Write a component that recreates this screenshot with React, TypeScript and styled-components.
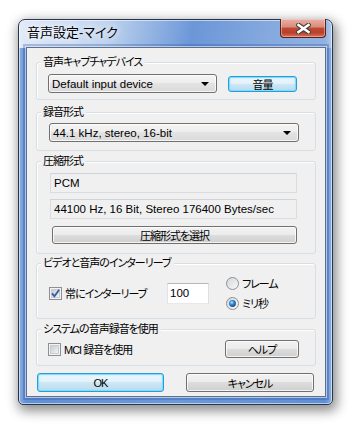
import React from 'react';
import styled, { createGlobalStyle, css } from 'styled-components';

const GlobalStyle = createGlobalStyle`
  html, body {
    margin: 0;
    padding: 0;
    background: #fff;
  }
  body {
    font-family: "Liberation Sans", "Noto Sans CJK JP", sans-serif;
    font-size: 11.5px;
    font-feature-settings: "palt";
    color: #000;
  }
  * {
    box-sizing: border-box;
  }
`;

// MS UI Gothic style: narrow kana
const jpText = css`
  font-size: 11px;
  letter-spacing: -1px;
`;

const Page = styled.div`
  width: 354px;
  height: 428px;
  padding: 19px 0 0 18px;
  overflow: hidden;
`;

const Window = styled.div`
  width: 315px;
  height: 386px;
  display: flex;
  flex-direction: column;
  border: 1px solid #27364d;
  border-radius: 7px 7px 5px 5px;
  background:
    linear-gradient(100deg, rgba(238, 244, 252, 0.9) 0%, rgba(222, 233, 247, 0.75) 28%, rgba(255, 255, 255, 0) 55%, rgba(255, 255, 255, 0.22) 80%, rgba(255, 255, 255, 0.32) 100%) top / 100% 28px no-repeat,
    linear-gradient(90deg, #8fb0e0 0px, #5f8fd4 7px, #6d98d8 50%, #5f8fd4 calc(100% - 7px), #8fb0e0 100%);
  box-shadow:
    inset 0 0 0 1px rgba(255, 255, 255, 0.55),
    2px 4px 12px 2px rgba(0, 0, 0, 0.45);
`;

const TitleBar = styled.div`
  height: 27px;
  display: flex;
  align-items: flex-start;
  padding-left: 8px;
`;

const Title = styled.span`
  font-size: 13px;
  line-height: 26px;
  text-shadow: 0 0 6px rgba(255, 255, 255, 0.95), 0 0 10px rgba(255, 255, 255, 0.8);
`;

const CloseButton = styled.div`
  width: 46px;
  height: 19px;
  margin: -1px 6px 0 auto;
  display: flex;
  align-items: center;
  justify-content: center;
  border: 1px solid #5a2118;
  border-top: none;
  border-radius: 0 0 4px 4px;
  background: linear-gradient(180deg, #e8b1a5 0%, #d98b79 45%, #c04a34 50%, #b9402b 75%, #d27157 100%);
  box-shadow: inset 0 0 0 1px rgba(255, 220, 210, 0.45);
`;

const Client = styled.div`
  flex: 1;
  margin: 0 6px 7px 7px;
  padding: 0 9px;
  display: flex;
  flex-direction: column;
  border: 1px solid #5d7090;
  background: #f0f0f0;
  box-shadow: 0 0 0 1px rgba(255, 255, 255, 0.55), 0 0 0 3px rgba(40, 80, 160, 0.3);
`;

const GroupBox = styled.div<{ $top: number }>`
  margin-top: ${(p) => p.$top}px;
  border: 1px solid #d5dfe5;
  border-radius: 3px;
  box-shadow: inset 1px 1px 0 #fff;
`;

const Legend = styled.div`
  ${jpText};
  width: fit-content;
  margin: -8px 0 0 4px;
  padding: 0 3px 0 2px;
  line-height: 14px;
  background: #f0f0f0;
`;

const buttonBase = css`
  font: inherit;
  color: #000;
  padding: 0;
  display: flex;
  align-items: center;
  justify-content: center;
  border: 1px solid #707070;
  border-radius: 3px;
  background: linear-gradient(180deg, #f2f2f2 0%, #ebebeb 50%, #dddddd 50%, #cfcfcf 100%);
  box-shadow: inset 0 0 0 1px rgba(255, 255, 255, 0.75);
`;

const PushButton = styled.div<{ $w: number; $h?: number; $focused?: boolean }>`
  ${buttonBase};
  ${jpText};
  width: ${(p) => p.$w}px;
  height: ${(p) => p.$h ?? 18}px;
  flex: none;
  ${(p) =>
    p.$focused &&
    css`
      border-color: #2c9ad6;
      background: linear-gradient(180deg, #eef7fc 0%, #e1f1fa 50%, #cde7f5 50%, #bcdcef 100%);
      box-shadow: inset 0 0 0 1px #7fdcfb, inset 0 0 2px 1px rgba(120, 220, 255, 0.6);
    `}
`;

const Combo = styled.div<{ $w: number }>`
  ${buttonBase};
  justify-content: flex-start;
  width: ${(p) => p.$w}px;
  height: 19px;
  padding: 0 7px 0 3px;
  background: linear-gradient(180deg, #f4f4f4 0%, #ededed 50%, #e3e3e3 50%, #dadada 100%);
`;

const ComboArrow = styled.span`
  margin-left: auto;
  width: 0;
  height: 0;
  border-left: 4px solid transparent;
  border-right: 4px solid transparent;
  border-top: 4px solid #000;
`;

const ReadField = styled.div<{ $gap?: number }>`
  width: 247px;
  height: 20px;
  margin-top: ${(p) => p.$gap ?? 0}px;
  padding-left: 3px;
  display: flex;
  align-items: center;
  border: 1px solid #d9dce1;
  border-top-color: #cfd2d7;
  border-radius: 1px;
  background: #f0f0f0;
`;

const EditBox = styled.div`
  width: 42px;
  height: 21px;
  padding-left: 2px;
  display: flex;
  align-items: center;
  flex: none;
  border: 1px solid;
  border-color: #b5b8be #dbdfe6 #e3e9ef #e2e3ea;
  background: #fff;
`;

const DeviceRow = styled.div`
  display: flex;
  align-items: center;
  gap: 11px;
  padding: 5px 0 6px 11px;
`;

const FormatBody = styled.div`
  padding: 4px 0 8px 12px;
`;

const CompressBody = styled.div`
  display: flex;
  flex-direction: column;
  padding: 5px 0 9px 13px;
`;

const SelectButton = styled(PushButton)`
  margin: 7px 0 0 2px;
`;

const InterleaveBody = styled.div`
  display: flex;
  align-items: center;
  padding: 3px 0 5px 12px;
`;

const CheckArea = styled.label<{ $w?: number }>`
  ${jpText};
  display: flex;
  align-items: center;
  gap: 3px;
  width: ${(p) => (p.$w ? `${p.$w}px` : 'auto')};
  flex: none;
`;

const RadioColumn = styled.div`
  display: flex;
  flex-direction: column;
  margin-left: 17px;
`;

const RadioRow = styled.label`
  ${jpText};
  height: 20px;
  display: flex;
  align-items: center;
  gap: 3px;
`;

const SystemBody = styled.div`
  display: flex;
  align-items: center;
  padding: 4px 16px 7px 11px;
`;

const HelpButton = styled(PushButton)`
  margin-left: auto;
`;

const ButtonRow = styled.div`
  margin-top: 7px;
  padding: 0 2px 0 1px;
  display: flex;
  justify-content: space-between;
`;

const CloseGlyph = () => (
  <svg width="15" height="11" viewBox="0 0 15 11">
    <path d="M2.5 2 L12.5 9 M12.5 2 L2.5 9" stroke="#3f3f3f" strokeWidth="4.6" strokeLinecap="square" />
    <path d="M2.5 2 L12.5 9 M12.5 2 L2.5 9" stroke="#fff" strokeWidth="2.6" strokeLinecap="square" />
  </svg>
);

const CheckBox = ({ checked }: { checked?: boolean }) => (
  <svg width="13" height="13" viewBox="0 0 13 13">
    <defs>
      <linearGradient id={checked ? 'cb-on' : 'cb-off'} x1="0" y1="0" x2="1" y2="1">
        <stop offset="0" stopColor="#c6cad0" />
        <stop offset="1" stopColor="#f4f4f4" />
      </linearGradient>
    </defs>
    <rect x="0.5" y="0.5" width="12" height="12" fill="#f3f3f3" stroke="#8e8f8f" />
    <rect x="2.5" y="2.5" width="8" height="8" fill={`url(#${checked ? 'cb-on' : 'cb-off'})`} stroke="#c9ccd1" />
    {checked && <path d="M3 6.4 L5.4 9.2 L10.2 2.8" stroke="#3b5ea6" strokeWidth="1.9" fill="none" />}
  </svg>
);

const Radio = ({ selected, id }: { selected?: boolean; id: string }) => (
  <svg width="13" height="13" viewBox="0 0 13 13">
    <defs>
      <linearGradient id={`${id}-bg`} x1="0" y1="0" x2="1" y2="1">
        <stop offset="0" stopColor="#d2d4d8" />
        <stop offset="1" stopColor="#fbfbfb" />
      </linearGradient>
      <radialGradient id={`${id}-dot`} cx="0.4" cy="0.35" r="0.7">
        <stop offset="0" stopColor="#b9e6ff" />
        <stop offset="0.45" stopColor="#2f86d6" />
        <stop offset="1" stopColor="#0d3f7e" />
      </radialGradient>
    </defs>
    <circle cx="6.5" cy="6.5" r="6" fill={`url(#${id}-bg)`} stroke="#8e8f8f" />
    {selected && <circle cx="6.5" cy="6.5" r="3.4" fill={`url(#${id}-dot)`} />}
  </svg>
);

export default function App() {
  return (
    <>
      <GlobalStyle />
      <Page>
        <Window>
          <TitleBar>
            <Title>音声設定-マイク</Title>
            <CloseButton>
              <CloseGlyph />
            </CloseButton>
          </TitleBar>
          <Client>
            <GroupBox $top={14}>
              <Legend>音声キャプチャデバイス</Legend>
              <DeviceRow>
                <Combo $w={169}>
                  Default input device
                  <ComboArrow />
                </Combo>
                <PushButton $w={69} $h={16} $focused>
                  音量
                </PushButton>
              </DeviceRow>
            </GroupBox>

            <GroupBox $top={12}>
              <Legend>録音形式</Legend>
              <FormatBody>
                <Combo $w={250}>
                  44.1 kHz, stereo, 16-bit
                  <ComboArrow />
                </Combo>
              </FormatBody>
            </GroupBox>

            <GroupBox $top={10}>
              <Legend>圧縮形式</Legend>
              <CompressBody>
                <ReadField>PCM</ReadField>
                <ReadField $gap={6}>44100 Hz, 16 Bit, Stereo 176400 Bytes/sec</ReadField>
                <SelectButton $w={245}>圧縮形式を選択</SelectButton>
              </CompressBody>
            </GroupBox>

            <GroupBox $top={9}>
              <Legend>ビデオと音声のインターリーブ</Legend>
              <InterleaveBody>
                <CheckArea $w={118}>
                  <CheckBox checked />
                  常にインターリーブ
                </CheckArea>
                <EditBox>100</EditBox>
                <RadioColumn>
                  <RadioRow>
                    <Radio id="r-frame" />
                    フレーム
                  </RadioRow>
                  <RadioRow>
                    <Radio id="r-ms" selected />
                    ミリ秒
                  </RadioRow>
                </RadioColumn>
              </InterleaveBody>
            </GroupBox>

            <GroupBox $top={10}>
              <Legend>システムの音声録音を使用</Legend>
              <SystemBody>
                <CheckArea>
                  <CheckBox />
                  MCI 録音を使用
                </CheckArea>
                <HelpButton $w={74}>ヘルプ</HelpButton>
              </SystemBody>
            </GroupBox>

            <ButtonRow>
              <PushButton $w={127} $h={19} $focused>
                OK
              </PushButton>
              <PushButton $w={128} $h={19}>
                キャンセル
              </PushButton>
            </ButtonRow>
          </Client>
        </Window>
      </Page>
    </>
  );
}
